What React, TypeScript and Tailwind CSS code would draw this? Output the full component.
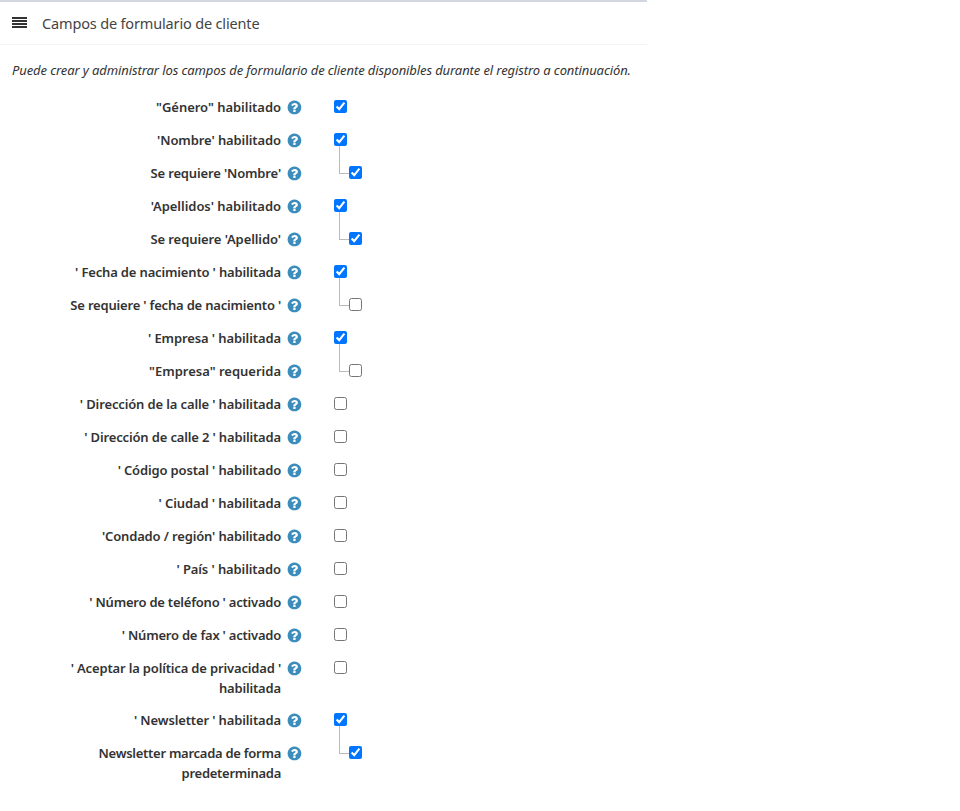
import { useState } from "react";

type Field = { lines: string[]; tracking: string; checked?: boolean; child?: boolean };

const fields: Field[] = [
  { lines: ['"Género" habilitado'], tracking: "tracking-[-0.03px]", checked: true },
  { lines: ["'Nombre' habilitado"], tracking: "tracking-[-0.1px]", checked: true },
  { lines: ["Se requiere 'Nombre'"], tracking: "tracking-[-0.15px]", checked: true, child: true },
  { lines: ["'Apellidos' habilitado"], tracking: "tracking-[-0.04px]", checked: true },
  { lines: ["Se requiere 'Apellido'"], tracking: "tracking-[-0.08px]", checked: true, child: true },
  { lines: ["' Fecha de nacimiento ' habilitada"], tracking: "tracking-[-0.16px]", checked: true },
  { lines: ["Se requiere ' fecha de nacimiento '"], tracking: "tracking-[-0.19px]", child: true },
  { lines: ["' Empresa ' habilitada"], tracking: "tracking-[-0.1px]", checked: true },
  { lines: ['"Empresa" requerida'], tracking: "tracking-normal", child: true },
  { lines: ["' Dirección de la calle ' habilitada"], tracking: "tracking-[-0.13px]" },
  { lines: ["' Dirección de calle 2 ' habilitada"], tracking: "tracking-[-0.15px]" },
  { lines: ["' Código postal ' habilitado"], tracking: "tracking-[-0.15px]" },
  { lines: ["' Ciudad ' habilitada"], tracking: "tracking-[-0.1px]" },
  { lines: ["'Condado / región' habilitado"], tracking: "tracking-[-0.15px]" },
  { lines: ["' País ' habilitado"], tracking: "tracking-[-0.1px]" },
  { lines: ["' Número de teléfono ' activado"], tracking: "tracking-[-0.22px]" },
  { lines: ["' Número de fax ' activado"], tracking: "tracking-[-0.22px]" },
  { lines: ["' Aceptar la política de privacidad '", "habilitada"], tracking: "tracking-[-0.16px]" },
  { lines: ["' Newsletter ' habilitada"], tracking: "tracking-[-0.13px]", checked: true },
  { lines: ["Newsletter marcada de forma", "predeterminada"], tracking: "tracking-[-0.27px]", checked: true, child: true },
];

function HelpIcon() {
  return (
    <svg viewBox="-50 -50 1792 1792" className="mt-[2px] ml-[5px] size-4 shrink-0 fill-[#3c8dbc]">
      <path d="M1024 1376v-192q0-14-9-23t-23-9H800q-14 0-23 9t-9 23v192q0 14 9 23t23 9h192q14 0 23-9t9-23zm256-672q0-88-55.5-163T1086 425t-170-41q-243 0-371 213-15 24 8 42l132 100q7 6 19 6 16 0 25-12 53-68 86-92 34-24 86-24 48 0 85.5 26t37.5 59q0 38-20 61t-68 45q-63 28-115.5 86.5T768 1020v36q0 14 9 23t23 9h192q14 0 23-9t9-23q0-19 21.5-49.5T1100 957q32-18 49-28.5t46-35 44.5-48 28-60.5 12.5-81zm384 192q0 209-103 385.5T1281.5 1561 896 1664t-385.5-103T231 1281.5 128 896t103-385.5T510.5 231 896 128t385.5 103T1561 510.5 1664 896z" />
    </svg>
  );
}

function FieldRow({ field }: { field: Field }) {
  const [on, setOn] = useState(!!field.checked);
  return (
    <label className={field.lines.length > 1 ? "flex h-[39px] items-start" : "flex h-5 items-start"}>
      <span className={`flex w-[281px] shrink-0 flex-col items-end text-[13px] leading-5 font-semibold whitespace-nowrap ${field.tracking}`}>
        {field.lines.map((line) => (
          <span key={line}>{line}</span>
        ))}
      </span>
      <HelpIcon />
      <span className="relative ml-8 flex pt-[3px]">
        {field.child && (
          <span className="absolute -top-[17px] left-[5px] h-[28px] w-[10px] border-b border-l border-[#bbb]" />
        )}
        <input
          type="checkbox"
          checked={on}
          onChange={() => setOn(!on)}
          className={field.child ? "ml-[15px] size-[13px]" : "size-[13px]"}
        />
      </span>
    </label>
  );
}

export default function App() {
  return (
    <main className="min-h-[811px] bg-white font-['Noto_Sans',sans-serif] text-[#333]">
      <section className="w-[647px] border-t-2 border-[#d2d6de]">
        <header className="flex h-[43px] items-center border-b border-[#f4f4f4] pl-3 text-[#444]">
          <svg viewBox="0 0 15 11" className="mb-px h-[11px] w-[15px] fill-[#333]" shapeRendering="crispEdges">
            <path d="M0 0h15v2H0zM0 3h15v2H0zM0 6h15v2H0zM0 9h15v2H0z" />
          </svg>
          <h1 className="ml-[15px] text-[14.5px] leading-5 tracking-[-0.16px] whitespace-nowrap">Campos de formulario de cliente</h1>
        </header>
        <p className="mt-[15px] pl-3 text-[13px] leading-5 tracking-[-0.1px] whitespace-nowrap italic">
          Puede crear y administrar los campos de formulario de cliente disponibles durante el registro a continuación.
        </p>
        <div className="mt-[17px] flex flex-col gap-[13px]">
          {fields.map((field) => (
            <FieldRow key={field.lines[0]} field={field} />
          ))}
        </div>
      </section>
    </main>
  );
}
